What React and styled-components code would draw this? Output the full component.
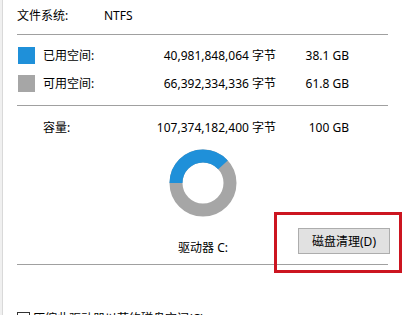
import { Fragment } from "react";
import styled, { createGlobalStyle } from "styled-components";

const Global = createGlobalStyle`
  body {
    margin: 0;
    background: #f0f0f0;
    font-family: "Noto Sans", "Noto Sans CJK SC", sans-serif;
    font-size: 12px;
    color: #000;
  }
`;

const Screen = styled.div`
  position: relative;
  width: 412px;
  height: 315px;
  overflow: hidden;
  background: #f0f0f0;
`;

const Panel = styled.div`
  margin-left: 2px;
  width: 401px;
  height: 315px;
  background: #fff;
  border-left: 1px solid #d9d9d9;
  border-right: 1px solid #d9d9d9;
  padding: 5px 0 0 14px;
  box-sizing: content-box;
`;

const Content = styled.div`
  width: 371px;
  display: flex;
  flex-direction: column;
`;

const FsRow = styled.div`
  display: flex;
  height: 20px;
  align-items: center;
`;

const FsLabel = styled.span`
  width: 87px;
`;

const Divider = styled.div`
  height: 1px;
  background: #a0a0a0;
  margin-top: ${(p) => p.$top}px;
`;

const InfoGrid = styled.div`
  display: grid;
  grid-template-columns: 26px 93px 140px 73px;
  grid-auto-rows: ${(p) => p.$row}px;
  align-items: center;
  margin-top: ${(p) => p.$top}px;
`;

const Swatch = styled.span`
  width: 17px;
  height: 17px;
  margin-left: 1px;
  background: ${(p) => p.$color};
`;

const Num = styled.span`
  text-align: right;
  white-space: nowrap;
`;

const Donut = styled.svg`
  display: block;
  align-self: center;
  margin-top: 12px;
`;

const DriveRow = styled.div`
  display: grid;
  grid-template-columns: 1fr auto 1fr;
  align-items: start;
  margin-top: 11px;
`;

const DriveLabel = styled.span`
  grid-column: 2;
  line-height: 16px;
  margin-top: 12px;
  margin-left: 1px;
`;

const CleanButton = styled.button`
  grid-column: 3;
  justify-self: end;
  margin-right: -2px;
  width: 92px;
  height: 26px;
  background: #e1e1e1;
  border: 1px solid #adadad;
  font: inherit;
  color: #000;
  padding: 0;
`;

const CheckRow = styled.label`
  display: flex;
  align-items: flex-start;
  gap: 2px;
  margin-top: 46px;
  line-height: 16px;
  white-space: nowrap;
`;

const Box = styled.span`
  width: 11px;
  height: 11px;
  margin-top: 1px;
  border: 1px solid #333;
  background: #fff;
  margin-right: 1px;
`;

const Highlight = styled.div`
  position: absolute;
  left: 274px;
  top: 212px;
  width: 128px;
  height: 61px;
  box-sizing: border-box;
  border: 3px solid #cc1520;
`;

const rows = [
  { color: "#1f90d9", label: "已用空间:", bytes: "40,981,848,064 字节", size: "38.1 GB" },
  { color: "#a6a6a6", label: "可用空间:", bytes: "66,392,334,336 字节", size: "61.8 GB" },
];

function App() {
  const r = 27;
  const c = 2 * Math.PI * r;
  const used = 0.381 * c;
  return (
    <Screen>
      <Global />
      <Panel>
        <Content>
          <FsRow>
            <FsLabel>文件系统:</FsLabel>
            <span>NTFS</span>
          </FsRow>
          <Divider $top={9} />
          <InfoGrid $row={28} $top={6}>
            {rows.map((row) => (
              <Fragment key={row.label}>
                <Swatch $color={row.color} />
                <span>{row.label}</span>
                <Num>{row.bytes}</Num>
                <Num>{row.size}</Num>
              </Fragment>
            ))}
          </InfoGrid>
          <Divider $top={8} />
          <InfoGrid $row={20} $top={11}>
            <span />
            <span>容量:</span>
            <Num>107,374,182,400 字节</Num>
            <Num>100 GB</Num>
          </InfoGrid>
          <Donut width="68" height="68" viewBox="0 0 68 68">
            <circle cx="34" cy="34" r={r} fill="none" stroke="#a6a6a6" strokeWidth="13" />
            <circle
              cx="34"
              cy="34"
              r={r}
              fill="none"
              stroke="#1f90d9"
              strokeWidth="13"
              strokeDasharray={`${used} ${c}`}
              transform="rotate(180 34 34)"
            />
          </Donut>
          <DriveRow>
            <DriveLabel>驱动器 C:</DriveLabel>
            <CleanButton>磁盘清理(D)</CleanButton>
          </DriveRow>
          <Divider $top={8} />
          <CheckRow>
            <Box />
            <span>压缩此驱动器以节约磁盘空间(C)</span>
          </CheckRow>
        </Content>
      </Panel>
      <Highlight />
    </Screen>
  );
}

export default App;
